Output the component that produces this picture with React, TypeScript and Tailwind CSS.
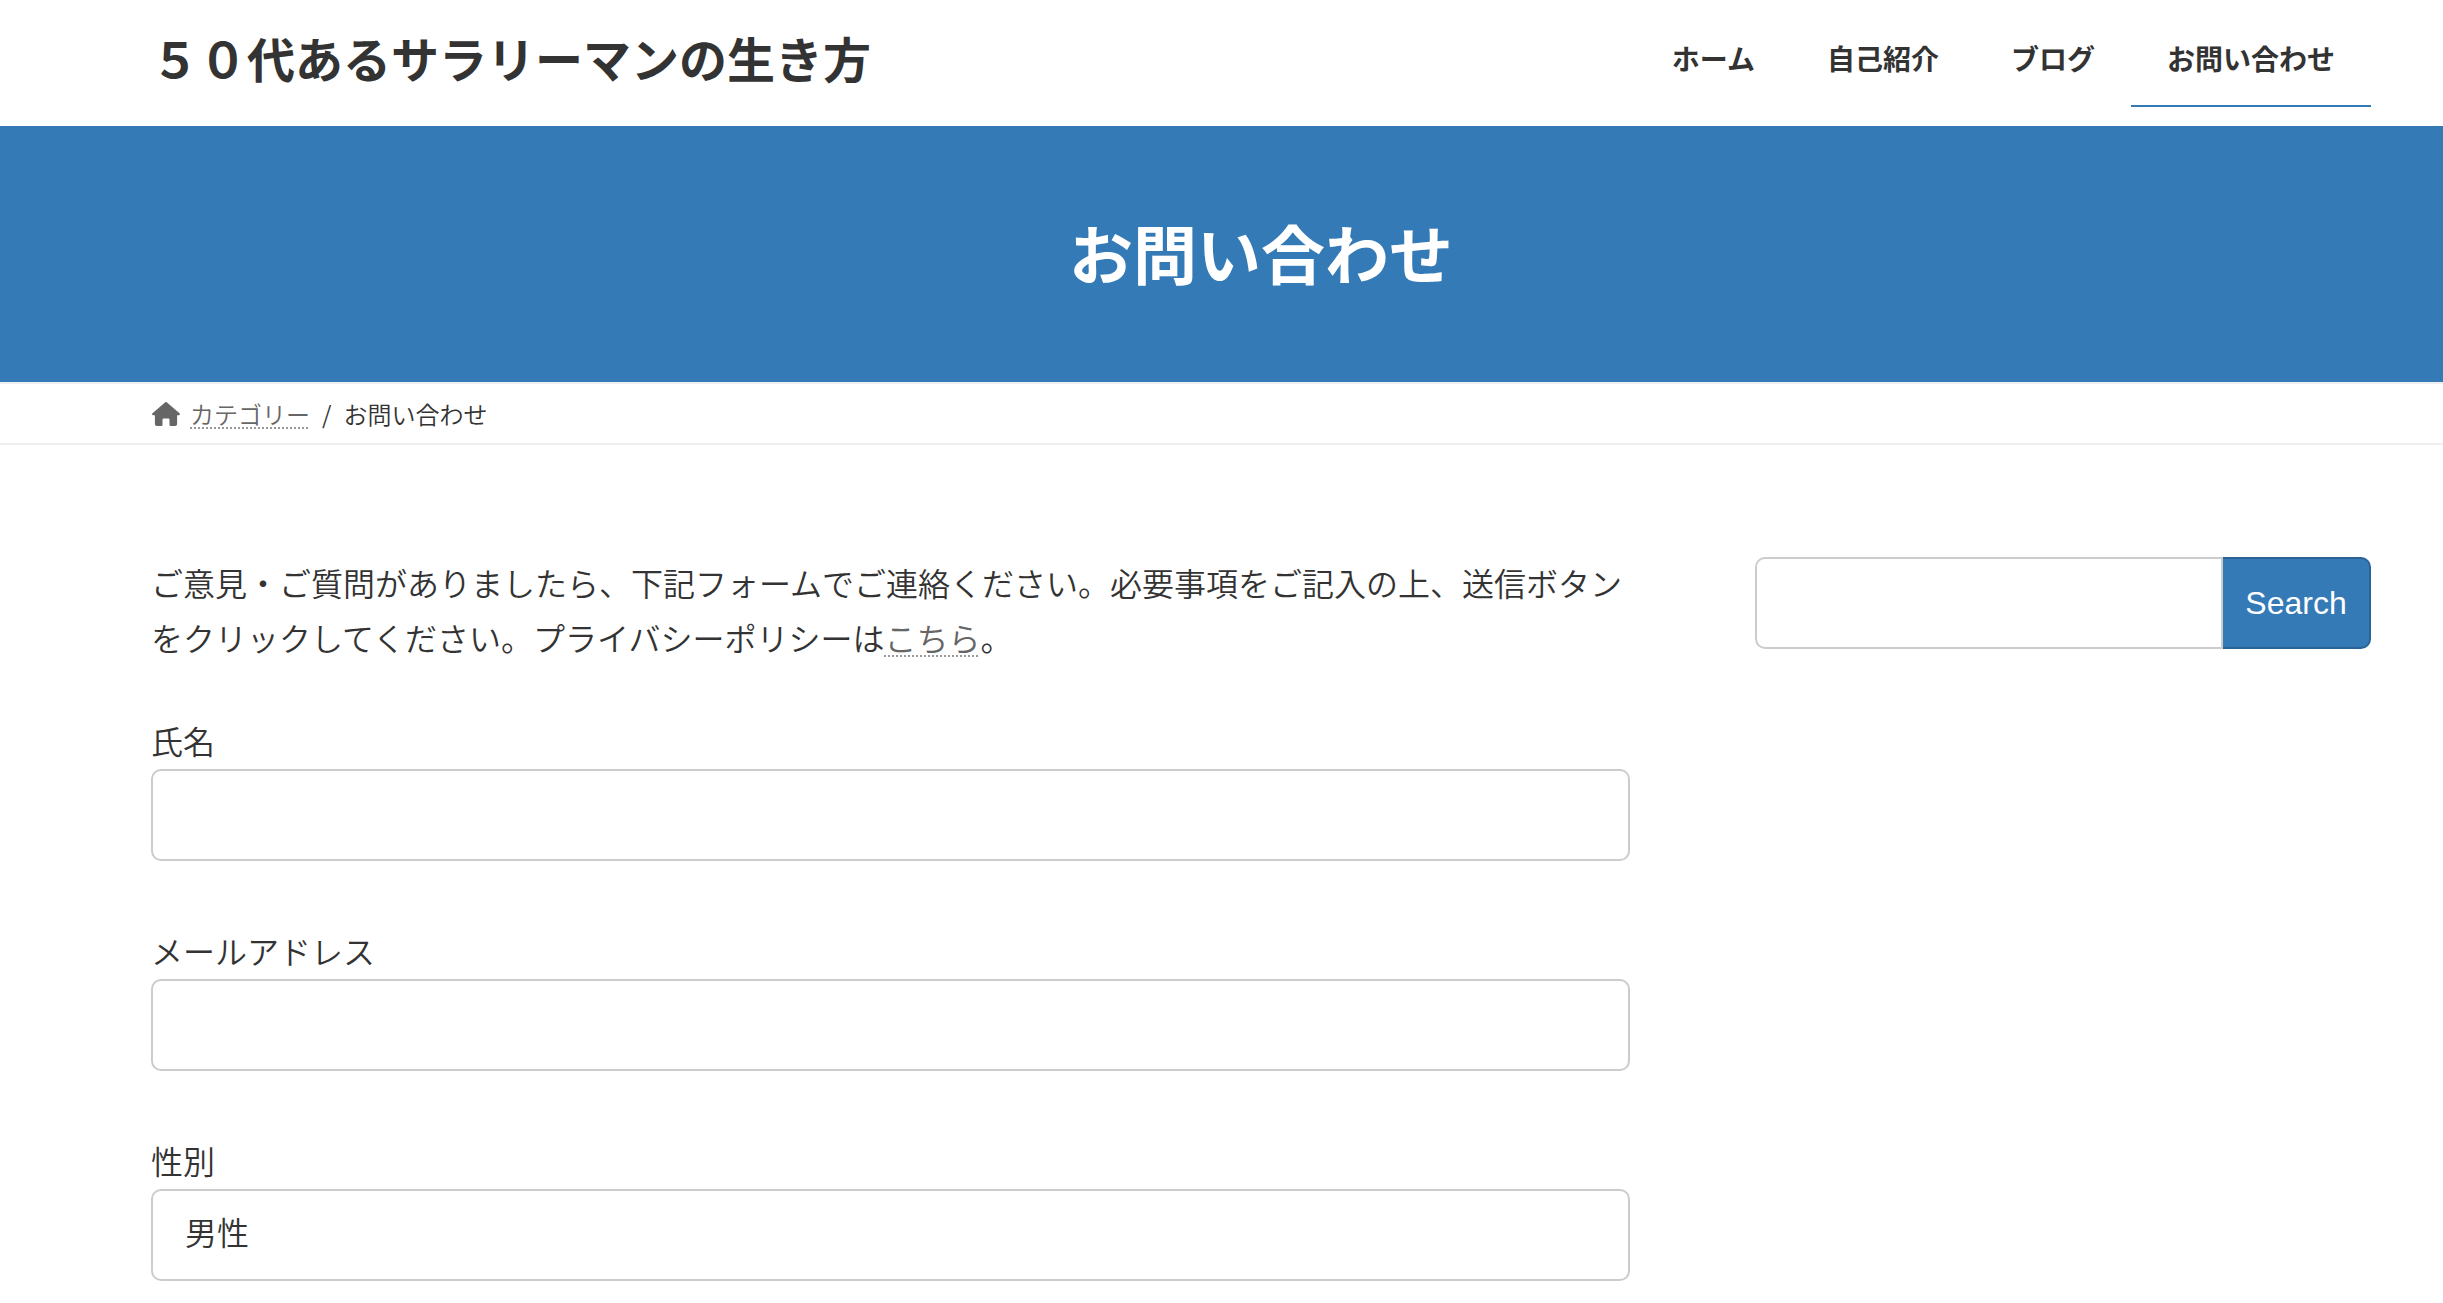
import type { ReactNode } from "react";

const navItems = ["ホーム", "自己紹介", "ブログ", "お問い合わせ"];
const current = "お問い合わせ";

const control =
  "block h-[92px] w-full rounded-[10px] border-2 border-[#ccc] bg-white px-8 text-[32px] text-[#333] outline-none";

function HomeIcon() {
  return (
    <svg viewBox="0 0 28 24" className="h-6 w-7 fill-[#666]" aria-hidden="true">
      <path d="M13 .4a1.500 1.500 0 0 1 2 0l12.500 10.800c.4.4.6.8.4 1.200-.2.5-.6.8-1.200.8h-1.600V22c0 1.200-.9 2-2 2h-4.300c-.8 0-1.300-.6-1.300-1.300V18c0-.9-.5-1.400-1.400-1.400h-4.200c-.9 0-1.400.5-1.400 1.400v4.700c0 .7-.5 1.300-1.300 1.300H4.900c-1.100 0-2-.8-2-2v-8.800H1.300c-.6 0-1-.3-1.200-.8-.2-.4 0-.8.4-1.200z" />
    </svg>
  );
}

function DottedLink({ href, children }: { href: string; children: ReactNode }) {
  return (
    <a
      href={href}
      className="text-[#666] underline decoration-[#999] decoration-dotted decoration-2 underline-offset-4"
    >
      {children}
    </a>
  );
}

function Field({ id, label, children }: { id: string; label: string; children: ReactNode }) {
  return (
    <div>
      <label htmlFor={id} className="mb-0.5 block leading-[54px]">
        {label}
      </label>
      {children}
    </div>
  );
}

export default function App() {
  return (
    <div className="bg-white font-['Noto_Sans_CJK_JP',sans-serif] text-[32px] leading-[55px] font-[350] text-[#333]">
      <header className="flex h-[126px] items-start justify-between pr-[72px] pl-[151px]">
        <a href="#top" className="pt-[21px] text-5xl leading-[72px] font-bold">
          ５０代あるサラリーマンの生き方
        </a>
        <nav className="flex text-[28px] leading-10 font-bold">
          {navItems.map((item) => (
            <a
              key={item}
              href="#nav"
              aria-current={item === current ? "page" : undefined}
              className="border-b-2 border-transparent px-9 pt-[38px] pb-[27px] aria-[current=page]:border-[#337ab7]"
            >
              {item}
            </a>
          ))}
        </nav>
      </header>

      <div className="border-b-2 border-[#eee] bg-[#337ab7] pt-20 pr-[72px] pb-[86px] pl-[151px]">
        <h1 className="text-center text-[64px] leading-[90px] font-bold text-white">お問い合わせ</h1>
      </div>

      <nav aria-label="パンくず" className="border-b-2 border-[#eee] pr-[72px] pl-[152px]">
        <ol className="flex h-[59px] items-center text-2xl leading-9">
          <li className="flex items-center gap-[10px]">
            <HomeIcon />
            <DottedLink href="#category">カテゴリー</DottedLink>
          </li>
          <li className="px-3" aria-hidden="true">/</li>
          <li>お問い合わせ</li>
        </ol>
      </nav>

      <div className="grid grid-cols-[12fr_5fr] items-start gap-[125px] pt-[110px] pr-[72px] pb-5 pl-[151px]">
        <main>
          <p className="mb-12">
            ご意見・ご質問がありましたら、下記フォームでご連絡ください。必要事項をご記入の上、送信ボタンをクリックしてください。プライバシーポリシーは
            <DottedLink href="#privacy">こちら</DottedLink>。
          </p>
          <form className="flex flex-col gap-[62px]">
            <Field id="name" label="氏名">
              <input id="name" type="text" className={control} />
            </Field>
            <Field id="email" label="メールアドレス">
              <input id="email" type="email" className={control} />
            </Field>
            <Field id="gender" label="性別">
              <select id="gender" className={`${control} appearance-none pb-2`}>
                <option>男性</option>
                <option>女性</option>
              </select>
            </Field>
          </form>
        </main>

        <aside className="pt-0.5">
          <form role="search" className="flex h-[92px]">
            <input
              type="search"
              aria-label="Search"
              className="min-w-0 flex-1 rounded-l-[10px] border-2 border-[#ccc] bg-white px-6 outline-none"
            />
            <button
              type="button"
              className="w-[148px] rounded-r-[10px] border-2 border-l-0 border-[#2a6496] bg-[#337ab7] font-['Liberation_Sans',sans-serif] text-white"
            >
              Search
            </button>
          </form>
        </aside>
      </div>
    </div>
  );
}
